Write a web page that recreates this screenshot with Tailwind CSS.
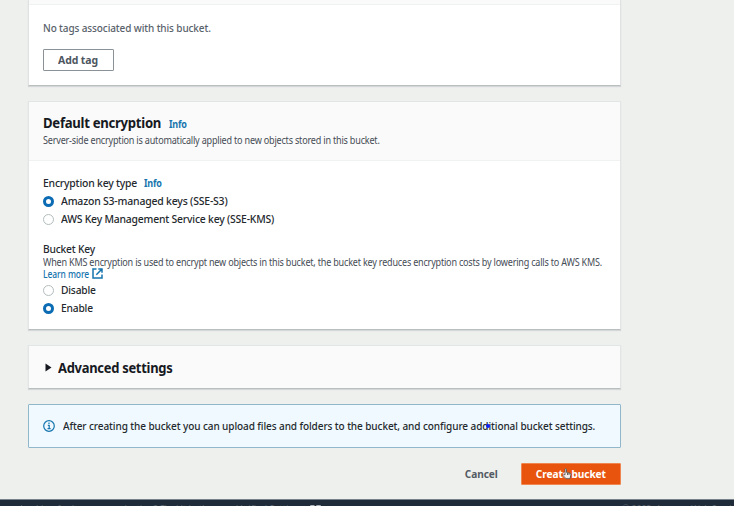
<!DOCTYPE html>
<html lang="en">
<head>
<meta charset="utf-8">
<title>Create bucket</title>
<script src="https://cdn.jsdelivr.net/npm/@tailwindcss/browser@4"></script>
</head>
<body class="w-[734px] h-[506px] overflow-hidden bg-[#eef0ee] font-['Noto_Sans','Open_Sans',sans-serif] text-[11px] text-[#24292e] whitespace-nowrap flex flex-col">
<main class="w-[593px] ml-[28px] h-[499px] shrink-0 flex flex-col">
  <section class="h-[86px] shrink-0 bg-white border-x border-x-[#dfe2e2] border-b border-b-[#b9bebe] shadow-[0_1px_1px_#d3d7d7]">
    <div class="h-[5px] bg-[#fafafa] border-b border-[#f0f1f1]"></div>
    <div class="pl-[14px] pt-[15px]">
      <p class="h-4 leading-4 text-[#59626b] font-medium"><span class="inline-block origin-left scale-x-[0.908] tracking-[-0.12px]">No tags associated with this bucket.</span></p>
      <button class="mt-[13px] block w-[71px] h-[22px] border border-[#8b9297] rounded-[1px] font-bold text-[#4d565f] leading-[20px] pr-[2px]"><span class="inline-block scale-x-[0.95] tracking-[-0.1px]">Add tag</span></button>
    </div>
  </section>

  <section class="mt-[15px] h-[229px] shrink-0 bg-white border border-[#e2e5e5] border-b-[#b9bebe] shadow-[0_1px_1px_#d3d7d7]">
    <header class="h-[59px] bg-[#fafafa] border-b border-[#f0f1f1] pl-[14px] pt-[11px]">
      <div class="h-5 flex items-center"><h2 class="text-[14px] leading-5 font-bold text-[#16191f] w-[126px]"><span class="inline-block origin-left scale-x-[0.938] tracking-[-0.3px]">Default encryption</span></h2><a class="font-bold text-[10px] text-[#1675ae] pt-[3px]"><span class="inline-block origin-left scale-x-[0.9] tracking-[-0.2px]">Info</span></a></div>
      <p class="h-[14px] leading-[14px] text-[10px] text-[#454c55]"><span class="inline-block origin-left scale-x-[0.906] tracking-[-0.22px]">Server-side encryption is automatically applied to new objects stored in this bucket.</span></p>
    </header>
    <div class="pl-[14px] pt-[13px] font-medium">
      <div class="h-[18px] flex items-center"><span class="w-[101px]"><span class="inline-block origin-left scale-x-[0.945] tracking-[-0.2px]">Encryption key type</span></span><a class="font-bold text-[10px] text-[#1675ae]"><span class="inline-block origin-left scale-x-[0.9] tracking-[-0.2px]">Info</span></a></div>
      <label class="h-[18px] flex items-center gap-[7px]"><i class="size-[11px] rounded-full border-[3.5px] border-[#0b6cb3] bg-white"></i><span class="inline-block origin-left scale-x-[0.95] tracking-[-0.2px]">Amazon S3-managed keys (SSE-S3)</span></label>
      <label class="h-[18px] flex items-center gap-[7px]"><i class="size-[11px] rounded-full border border-[#b4bdbd] bg-white"></i><span class="inline-block origin-left scale-x-[0.942] tracking-[-0.2px]">AWS Key Management Service key (SSE-KMS)</span></label>
      <p class="mt-[14px] h-[14px] leading-[14px]"><span class="inline-block origin-left scale-x-[0.93] tracking-[-0.2px]">Bucket Key</span></p>
      <p class="h-[11px] leading-[12px] text-[10px] font-normal text-[#454c55]"><span class="inline-block origin-left scale-x-[0.9045] tracking-[-0.22px]">When KMS encryption is used to encrypt new objects in this bucket, the bucket key reduces encryption costs by lowering calls to AWS KMS.</span></p>
      <a class="h-[12px] flex items-center text-[10px] leading-[12px] text-[#1675ae]"><span class="w-[49px] pt-px"><span class="inline-block origin-left scale-x-[0.85] tracking-[-0.1px]">Learn more</span></span><svg class="size-[11px] shrink-0" viewBox="0 0 11 11" fill="none" stroke="currentColor" stroke-width="1.5"><path d="M4.5 1H1V10H10V6.5M6.3 1H10V4.7M10 1L4.3 6.7"/></svg></a>
      <label class="h-[18px] mt-[2px] flex items-center gap-[7px]"><i class="size-[11px] rounded-full border border-[#b4bdbd] bg-white"></i><span class="inline-block origin-left scale-x-[0.93] tracking-[-0.2px]">Disable</span></label>
      <label class="h-[18px] flex items-center gap-[7px]"><i class="size-[11px] rounded-full border-[3.5px] border-[#0b6cb3] bg-white"></i><span class="inline-block origin-left scale-x-[0.93] tracking-[-0.2px]">Enable</span></label>
    </div>
  </section>

  <section class="mt-[15px] h-[44px] shrink-0 bg-[#fafafa] border border-[#e2e5e5] border-b-[#b9bebe] shadow-[0_1px_1px_#d3d7d7] flex items-center pl-[16px] gap-[6px]">
    <svg class="w-[7px] h-[9px]" viewBox="0 0 7 9"><path d="M.5 .5L6.5 4.5L.5 8.5Z" fill="#16191f"/></svg>
    <h2 class="text-[14px] font-bold text-[#16191f]"><span class="inline-block origin-left scale-x-[0.925] tracking-[-0.3px]">Advanced settings</span></h2>
  </section>

  <section class="relative mt-[15px] h-[44px] shrink-0 bg-[#f0f9ff] border border-[#91b7cb] rounded-[1px] flex items-center pl-[14px] gap-[8px]">
    <svg class="size-3 shrink-0" viewBox="0 0 12 12" fill="none" stroke="#1675ae" stroke-width="1.2"><circle cx="6" cy="6" r="5.3"/><path d="M6 2.6V4M4.8 5.3H6.2V8.5M4.5 8.7H7.6"/></svg>
    <span class="inline-block w-[534px]"><span class="inline-block origin-left scale-x-[0.911] font-medium tracking-[-0.1px]">After creating the bucket you can upload files and folders to the bucket, and configure additional bucket settings.</span></span>
    <i class="absolute left-[457px] top-[19px] w-[4px] h-[4px] rounded-full bg-[#0d20ff]"></i>
  </section>

  <div class="mt-[15px] h-[22px] flex justify-end items-center font-bold">
    <button class="text-[#545b64] mr-[23px]"><span class="inline-block origin-right scale-x-[0.92] tracking-[-0.1px]">Cancel</span></button>
    <button class="relative w-[100px] h-[22px] bg-[#e8540d] border border-[#ef8650] text-white rounded-[1px] leading-5"><span class="inline-block scale-x-[0.925] tracking-[-0.1px]">Create bucket</span>
      <svg class="absolute left-[40px] top-[4px] w-[10px] h-[12px]" viewBox="0 0 10 12" fill="#f3eee9" stroke="#59524d" stroke-width=".9"><path d="M3 6.8V1.5Q3 .6 3.7 .6T4.5 1.5V4.5L8 5.2Q9 5.5 8.9 6.8L8 10.7H4L1 7.5Q1.5 6 3 6.8ZM5.5 5V7M7 5.2V7"/></svg></button>
  </div>
</main>
<footer class="h-[7px] shrink-0 bg-[#1f2b38] border-t border-[#77818a] overflow-hidden text-[10px] leading-[14px] text-[#56616c] flex">
  <span class="ml-[20px] pt-[2px] w-[290px]"><span class="inline-block origin-left scale-x-[0.96] tracking-[-0.2px]">Looking for language selection? Find it in the new Unified Settings</span></span>
  <svg class="mt-[5px] size-[11px] shrink-0" viewBox="0 0 11 11" fill="none" stroke="#d5dade" stroke-width="1.5"><path d="M4.5 1H1V10H10V6.5M6.3 1H10V4.7M10 1L4.3 6.7"/></svg>
  <span class="ml-[301px] pt-[2px]"><span class="inline-block origin-left scale-x-[0.9] tracking-[-0.2px]">© 2023, Amazon Web Services, Inc.</span></span>
</footer>
</body>
</html>
